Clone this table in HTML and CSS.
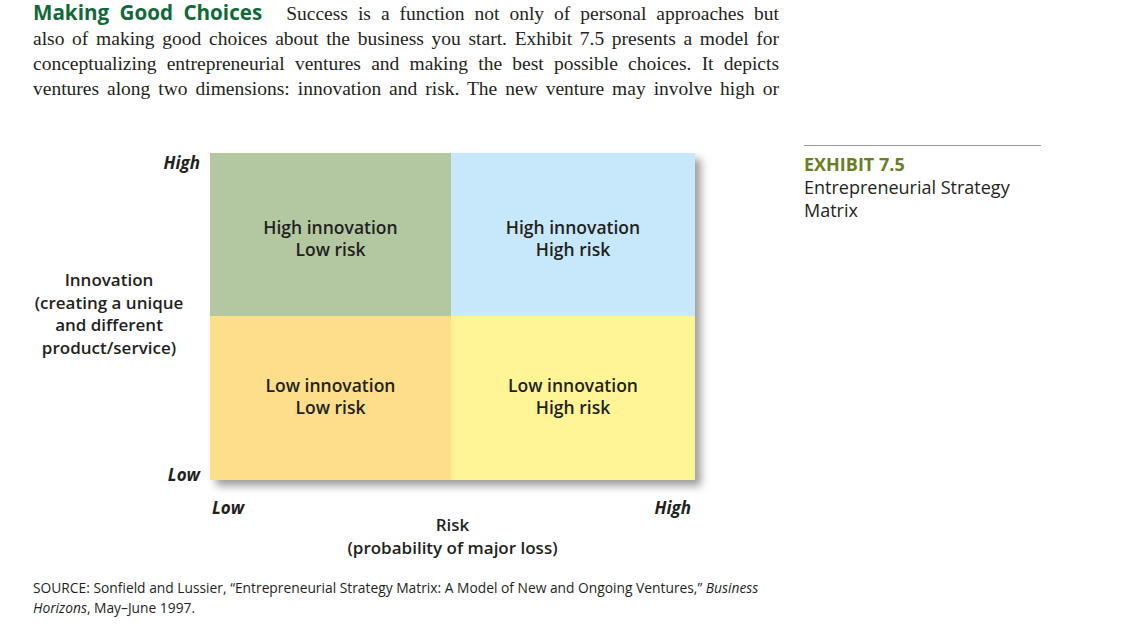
FILE: index.html
```html
<!DOCTYPE html>
<html lang="en">
<head>
<meta charset="utf-8">
<title>Entrepreneurial Strategy Matrix</title>
<link rel="stylesheet" href="styles.css">
</head>
<body>
<div class="page">
  <p class="intro"><span class="intro-head">Making Good Choices</span>Success is a function not only of personal approaches but<br>also of making good choices about the business you start. Exhibit 7.5 presents a model for<br>conceptualizing entrepreneurial ventures and making the best possible choices. It depicts<br>ventures along two dimensions: innovation and risk. The new venture may involve high or</p>

  <div class="figure">
    <div class="chart">
      <div class="y-axis">
        <div class="y-end">High</div>
        <div class="y-title">Innovation<br>(creating a unique<br>and different<br>product/service)</div>
        <div class="y-end y-low">Low</div>
      </div>
      <div class="matrix">
        <div class="cell cell-green">High innovation<br>Low risk</div>
        <div class="cell cell-blue">High innovation<br>High risk</div>
        <div class="cell cell-orange">Low innovation<br>Low risk</div>
        <div class="cell cell-yellow">Low innovation<br>High risk</div>
      </div>
      <div class="x-spacer"></div>
      <div class="x-axis">
        <div class="x-end x-low">Low</div>
        <div class="x-title">Risk<br>(probability of major loss)</div>
        <div class="x-end x-high">High</div>
      </div>
    </div>
    <div class="caption">
      <div class="caption-num">EXHIBIT 7.5</div>
      <div class="caption-title">Entrepreneurial Strategy<br>Matrix</div>
    </div>
  </div>

  <p class="source">SOURCE: Sonfield and Lussier, “Entrepreneurial Strategy Matrix: A Model of New and Ongoing Ventures,” <i>Business</i><br><i>Horizons</i>, May–June 1997.</p>
</div>
</body>
</html>
```

FILE: styles.css
```css
html, body {
  margin: 0;
  padding: 0;
  background: #ffffff;
}

.page {
  padding: 1px 0 0 33px;
  color: #231f20;
  font-family: "Open Sans", "Liberation Sans", sans-serif;
}

.intro {
  margin: 0;
  width: 746px;
  font-family: "Liberation Serif", "Times New Roman", serif;
  font-size: 19.5px;
  line-height: 25px;
  text-align: justify;
  text-align-last: justify;
  color: #231f20;
}

.intro-head {
  font-family: "Open Sans", "Liberation Sans", sans-serif;
  font-weight: 700;
  font-size: 20.6px;
  line-height: 1;
  color: #11693a;
  margin-right: 24px;
}

.figure {
  display: flex;
  margin-top: 44px;
}

.chart {
  display: grid;
  grid-template-columns: 167px 485px;
  column-gap: 10px;
  margin-top: 8px;
  font-weight: 600;
  font-size: 17.5px;
}

.y-axis {
  display: flex;
  flex-direction: column;
  justify-content: space-between;
  height: 327px;
}

.y-end {
  text-align: right;
  font-style: italic;
  font-weight: 700;
  font-size: 17px;
  line-height: 20px;
}

.y-low {
  margin-bottom: -5px;
}

.y-title {
  text-align: center;
  width: 152px;
  line-height: 22.5px;
  margin-bottom: 10px;
  font-size: 17px;
}

.matrix {
  display: grid;
  grid-template-columns: 241px 244px;
  grid-template-rows: 163px 164px;
  box-shadow: 6px 6px 8px rgba(0, 0, 0, 0.38);
}

.cell {
  text-align: center;
  line-height: 22px;
  padding-top: 63px;
  box-sizing: border-box;
}

.cell-green { background: #b3c8a0; }
.cell-blue { background: #c7e8fa; }
.cell-orange { background: #fdde8a; padding-top: 58px; }
.cell-yellow { background: #fff596; padding-top: 58px; }

.x-axis {
  display: grid;
  grid-template-columns: 1fr auto 1fr;
  margin-top: 16px;
  line-height: 23px;
  font-size: 17px;
}

.x-end {
  font-style: italic;
  font-weight: 700;
}

.x-low {
  justify-self: start;
  padding-left: 2px;
}

.x-high {
  justify-self: end;
  padding-right: 4px;
}

.x-title {
  text-align: center;
  padding-top: 17px;
}

.caption {
  margin-left: 109px;
  width: 237px;
  border-top: 1px solid #9a9a9a;
  padding-top: 7px;
  font-size: 18px;
  line-height: 23px;
}

.caption-num {
  color: #6b7d22;
  font-weight: 700;
}

.source {
  margin: 19px 0 0 0;
  font-size: 13.8px;
  line-height: 20px;
}
```
